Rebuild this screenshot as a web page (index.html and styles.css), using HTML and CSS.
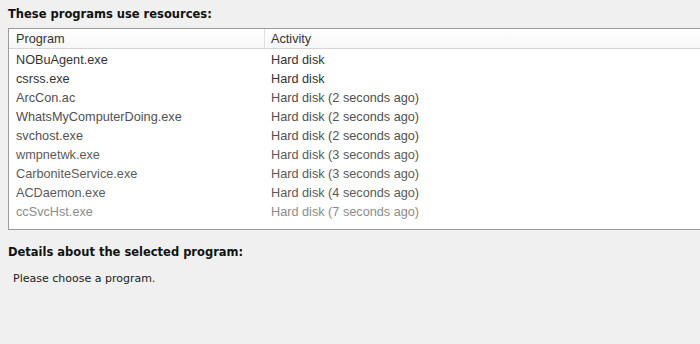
FILE: index.html
```html
<!DOCTYPE html>
<html lang="en">
<head>
    <meta charset="UTF-8">
    <title>Resource Monitor</title>
    <link rel="stylesheet" href="styles.css">
</head>
<body>
    <div class="panel">
        <div class="heading">These programs use resources:</div>
        <div class="listBox">
            <div class="row head">
                <div class="col name">Program</div>
                <div class="col activity">Activity</div>
            </div>
            <div class="row"><div class="col name">NOBuAgent.exe</div><div class="col activity">Hard disk</div></div>
            <div class="row"><div class="col name">csrss.exe</div><div class="col activity">Hard disk</div></div>
            <div class="row fade1"><div class="col name">ArcCon.ac</div><div class="col activity">Hard disk (2 seconds ago)</div></div>
            <div class="row fade1"><div class="col name">WhatsMyComputerDoing.exe</div><div class="col activity">Hard disk (2 seconds ago)</div></div>
            <div class="row fade1"><div class="col name">svchost.exe</div><div class="col activity">Hard disk (2 seconds ago)</div></div>
            <div class="row fade2"><div class="col name">wmpnetwk.exe</div><div class="col activity">Hard disk (3 seconds ago)</div></div>
            <div class="row fade2"><div class="col name">CarboniteService.exe</div><div class="col activity">Hard disk (3 seconds ago)</div></div>
            <div class="row fade2"><div class="col name">ACDaemon.exe</div><div class="col activity">Hard disk (4 seconds ago)</div></div>
            <div class="row fade3"><div class="col name">ccSvcHst.exe</div><div class="col activity">Hard disk (7 seconds ago)</div></div>
        </div>
        <div class="heading details">Details about the selected program:</div>
        <div class="hint">Please choose a program.</div>
    </div>
</body>
</html>
```

FILE: styles.css
```css
*{
    margin: 0;
    padding: 0;
    box-sizing: border-box;
}
body{
    background: #f0f0f0;
    width: 700px;
    height: 344px;
    overflow: hidden;
    font-family: "Liberation Sans", Arial, sans-serif;
}
.panel{
    padding: 7px 0 0 8px;
}
.heading{
    font-family: "DejaVu Sans", Verdana, sans-serif;
    font-weight: bold;
    font-size: 11.5px;
    line-height: 15px;
    color: #111;
    margin-bottom: 6px;
}
.listBox{
    background: #fff;
    border: 1px solid #9c9c9c;
    border-right: none;
    height: 202px;
}
.row{
    display: flex;
    height: 19px;
    align-items: center;
    font-size: 12.7px;
    color: #333;
}
.row.head{
    height: 20px;
    background: linear-gradient(#ffffff, #f7f7f7);
    border-bottom: 1px solid #d5d5d5;
    margin-bottom: 1px;
}
.col.name{
    width: 256px;
    padding-left: 7px;
}
.col.activity{
    padding-left: 6px;
}
.head .col.name{
    border-right: 1px solid #e0e0e0;
    height: 100%;
    display: flex;
    align-items: center;
}
.fade1{ color: #505050; }
.fade2{ color: #5a5a5a; }
.fade3{ color: #8c8c8c; }
.details{
    margin-top: 15px;
    margin-bottom: 12px;
}
.hint{
    font-family: "DejaVu Sans", Tahoma, sans-serif;
    font-size: 11px;
    color: #222;
    padding-left: 5px;
}
```
